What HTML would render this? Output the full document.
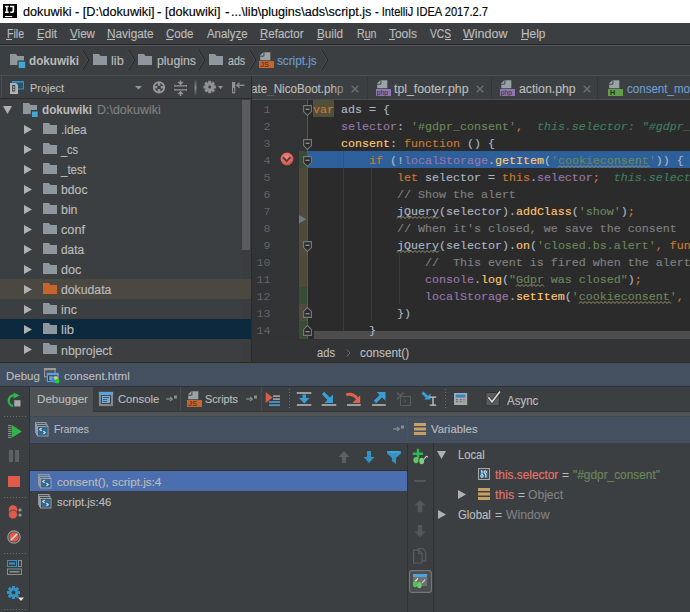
<!DOCTYPE html><html><head><meta charset="utf-8"><style>*{margin:0;padding:0;box-sizing:border-box}html,body{width:690px;height:612px;overflow:hidden;background:#3C3F41}.r{position:absolute}.t{position:absolute;white-space:pre;line-height:1;transform-origin:0 0}.s{position:absolute;overflow:visible}.code{-webkit-text-stroke:0.15px currentColor;position:absolute;left:313px;white-space:pre;font-family:"Liberation Mono",monospace;font-size:11.67px;line-height:1}.code u{text-decoration:none}.code i{font-style:italic}</style></head><body>
<div class="r" style="left:0px;top:0px;width:690px;height:23px;background:#FFFFFF;"></div>
<div class="r" style="left:3px;top:4px;width:14px;height:14px;background:#000000;"></div>
<div class="r" style="left:0px;top:23px;width:690px;height:21px;background:#3C3F41;"></div>
<div class="r" style="left:6px;top:39px;width:6px;height:1px;background:#BBBBBB;"></div>
<div class="r" style="left:37px;top:39px;width:6px;height:1px;background:#BBBBBB;"></div>
<div class="r" style="left:70px;top:39px;width:7px;height:1px;background:#BBBBBB;"></div>
<div class="r" style="left:107px;top:39px;width:8px;height:1px;background:#BBBBBB;"></div>
<div class="r" style="left:166px;top:39px;width:7px;height:1px;background:#BBBBBB;"></div>
<div class="r" style="left:237.7px;top:39px;width:4.600000000000023px;height:1px;background:#BBBBBB;"></div>
<div class="r" style="left:260px;top:39px;width:6px;height:1px;background:#BBBBBB;"></div>
<div class="r" style="left:317px;top:39px;width:6px;height:1px;background:#BBBBBB;"></div>
<div class="r" style="left:363.8px;top:39px;width:5.800000000000011px;height:1px;background:#BBBBBB;"></div>
<div class="r" style="left:389px;top:39px;width:6px;height:1px;background:#BBBBBB;"></div>
<div class="r" style="left:445.3px;top:39px;width:5.699999999999989px;height:1px;background:#BBBBBB;"></div>
<div class="r" style="left:463px;top:39px;width:10px;height:1px;background:#BBBBBB;"></div>
<div class="r" style="left:520.5px;top:39px;width:7.5px;height:1px;background:#BBBBBB;"></div>
<div class="r" style="left:0px;top:44px;width:690px;height:1px;background:#252526;"></div>
<div class="r" style="left:0px;top:45px;width:690px;height:1px;background:#555759;"></div>
<div class="r" style="left:0px;top:46px;width:690px;height:29px;background:#3C3F41;"></div>
<div class="r" style="left:0px;top:75px;width:690px;height:1px;background:#4D5052;"></div>
<div class="r" style="left:0px;top:76px;width:251px;height:22px;background:#3C3F41;"></div>
<div class="r" style="left:0px;top:98px;width:251px;height:1px;background:#2B2B2B;"></div>
<div class="r" style="left:1px;top:76px;width:1px;height:22px;background:#4B4E50;"></div>
<div class="r" style="left:0px;top:99px;width:251px;height:265px;background:#3C3F41;"></div>
<div class="r" style="left:241px;top:99px;width:10px;height:265px;background:#3A3D3F;"></div>
<div class="r" style="left:242px;top:100px;width:8px;height:150px;background:#595B5D;"></div>
<div class="r" style="left:251px;top:76px;width:1px;height:288px;background:#2B2B2B;"></div>
<div class="r" style="left:0px;top:279px;width:251px;height:20px;background:#4A4840;"></div>
<div class="r" style="left:0px;top:319px;width:251px;height:20px;background:#0D293E;"></div>
<div class="r" style="left:252px;top:76px;width:438px;height:23px;background:#3C3F41;"></div>
<div class="r" style="left:252px;top:99px;width:438px;height:1px;background:#4B4E50;"></div>
<div class="r" style="left:367px;top:77px;width:1px;height:22px;background:#333536;"></div>
<div class="r" style="left:491px;top:77px;width:1px;height:22px;background:#333536;"></div>
<div class="r" style="left:597px;top:77px;width:1px;height:22px;background:#333536;"></div>
<div class="r" style="left:252px;top:100px;width:56px;height:240px;background:#313335;"></div>
<div class="r" style="left:308px;top:100px;width:382px;height:240px;background:#2B2B2B;"></div>
<div class="r" style="left:299px;top:151px;width:8px;height:17px;background:#384C38;"></div>
<div class="r" style="left:299px;top:168px;width:8px;height:119px;background:#4F4A3C;"></div>
<div class="r" style="left:299px;top:287px;width:8px;height:34px;background:#384C38;"></div>
<div class="r" style="left:299px;top:304px;width:8px;height:17px;background:#4F4A3C;"></div>
<div class="r" style="left:299px;top:321px;width:8px;height:18px;background:#384C38;"></div>
<div class="r" style="left:307px;top:100px;width:1px;height:240px;background:#555759;"></div>
<div class="r" style="left:308px;top:151px;width:382px;height:17px;background:#2D5F9B;"></div>
<div class="r" style="left:313px;top:100px;width:21px;height:17px;background:#524F3B;"></div>
<div class="r" style="left:343px;top:151px;width:1px;height:189px;background:#393939;"></div>
<div class="r" style="left:343px;top:151px;width:1px;height:17px;background:#25528A;"></div>
<div class="r" style="left:371px;top:168px;width:1px;height:153px;background:#393939;"></div>
<div class="r" style="left:399px;top:253px;width:1px;height:51px;background:#393939;"></div>
<div class="r" style="left:314px;top:331px;width:376px;height:8px;background:#4D4D4D;"></div>
<div class="r" style="left:252px;top:339px;width:438px;height:1px;background:#323232;"></div>
<div class="r" style="left:252px;top:340px;width:438px;height:22px;background:#323436;"></div>
<div class="r" style="left:0px;top:362px;width:690px;height:1px;background:#2B2B2B;"></div>
<div class="r" style="left:0px;top:363px;width:690px;height:1px;background:#4B4C4C;"></div>
<div class="r" style="left:0px;top:364px;width:690px;height:22px;background:#444F60;"></div>
<div class="r" style="left:0px;top:386px;width:690px;height:1px;background:#2E343D;"></div>
<div class="r" style="left:0px;top:387px;width:690px;height:24px;background:#3C3F41;"></div>
<div class="r" style="left:30px;top:387px;width:63px;height:25px;background:#4E5254;"></div>
<div class="r" style="left:93px;top:411px;width:597px;height:1px;background:#36383A;"></div>
<div class="r" style="left:30px;top:412px;width:660px;height:4px;background:#4F5355;"></div>
<div class="r" style="left:30px;top:416px;width:660px;height:1px;background:#46494C;"></div>
<div class="r" style="left:29px;top:387px;width:1px;height:225px;background:#2F3133;"></div>
<div class="r" style="left:180px;top:387px;width:1px;height:24px;background:#4A4D4F;"></div>
<div class="r" style="left:261px;top:387px;width:1px;height:24px;background:#4A4D4F;"></div>
<div class="r" style="left:30px;top:417px;width:660px;height:26px;background:#444F60;"></div>
<div class="r" style="left:407px;top:417px;width:1px;height:195px;background:#2F3133;"></div>
<div class="r" style="left:407px;top:417px;width:1px;height:26px;background:#505356;"></div>
<div class="r" style="left:30px;top:443px;width:377px;height:169px;background:#3C3F41;"></div>
<div class="r" style="left:30px;top:443px;width:660px;height:1px;background:#393C3F;"></div>
<div class="r" style="left:30px;top:470px;width:377px;height:1px;background:#2F3133;"></div>
<div class="r" style="left:30px;top:471px;width:377px;height:20px;background:#4B6EAF;"></div>
<div class="r" style="left:408px;top:443px;width:282px;height:169px;background:#3C3F41;"></div>
<div class="r" style="left:433px;top:443px;width:1px;height:169px;background:#2F3133;"></div>
<div class="r" style="left:414px;top:480px;width:12px;height:2px;background:#55585A;"></div>
<div class="r" style="left:0px;top:387px;width:29px;height:225px;background:#3C3F41;"></div>
<div class="r" style="left:4px;top:416px;width:1px;height:1px;background:#6B6E70;"></div>
<div class="r" style="left:7px;top:416px;width:1px;height:1px;background:#6B6E70;"></div>
<div class="r" style="left:10px;top:416px;width:1px;height:1px;background:#6B6E70;"></div>
<div class="r" style="left:13px;top:416px;width:1px;height:1px;background:#6B6E70;"></div>
<div class="r" style="left:16px;top:416px;width:1px;height:1px;background:#6B6E70;"></div>
<div class="r" style="left:19px;top:416px;width:1px;height:1px;background:#6B6E70;"></div>
<div class="r" style="left:22px;top:416px;width:1px;height:1px;background:#6B6E70;"></div>
<div class="r" style="left:25px;top:416px;width:1px;height:1px;background:#6B6E70;"></div>
<div class="r" style="left:9px;top:450px;width:4px;height:12px;background:#5E6164;"></div>
<div class="r" style="left:15px;top:450px;width:4px;height:12px;background:#5E6164;"></div>
<div class="r" style="left:8px;top:476px;width:12px;height:11px;background:#E05B4B;"></div>
<div class="r" style="left:4px;top:497px;width:1px;height:1px;background:#6B6E70;"></div>
<div class="r" style="left:7px;top:497px;width:1px;height:1px;background:#6B6E70;"></div>
<div class="r" style="left:10px;top:497px;width:1px;height:1px;background:#6B6E70;"></div>
<div class="r" style="left:13px;top:497px;width:1px;height:1px;background:#6B6E70;"></div>
<div class="r" style="left:16px;top:497px;width:1px;height:1px;background:#6B6E70;"></div>
<div class="r" style="left:19px;top:497px;width:1px;height:1px;background:#6B6E70;"></div>
<div class="r" style="left:22px;top:497px;width:1px;height:1px;background:#6B6E70;"></div>
<div class="r" style="left:25px;top:497px;width:1px;height:1px;background:#6B6E70;"></div>
<div class="r" style="left:4px;top:553px;width:1px;height:1px;background:#6B6E70;"></div>
<div class="r" style="left:7px;top:553px;width:1px;height:1px;background:#6B6E70;"></div>
<div class="r" style="left:10px;top:553px;width:1px;height:1px;background:#6B6E70;"></div>
<div class="r" style="left:13px;top:553px;width:1px;height:1px;background:#6B6E70;"></div>
<div class="r" style="left:16px;top:553px;width:1px;height:1px;background:#6B6E70;"></div>
<div class="r" style="left:19px;top:553px;width:1px;height:1px;background:#6B6E70;"></div>
<div class="r" style="left:22px;top:553px;width:1px;height:1px;background:#6B6E70;"></div>
<div class="r" style="left:25px;top:553px;width:1px;height:1px;background:#6B6E70;"></div>
<div class="r" style="left:4px;top:609px;width:1px;height:1px;background:#6B6E70;"></div>
<div class="r" style="left:7px;top:609px;width:1px;height:1px;background:#6B6E70;"></div>
<div class="r" style="left:10px;top:609px;width:1px;height:1px;background:#6B6E70;"></div>
<div class="r" style="left:13px;top:609px;width:1px;height:1px;background:#6B6E70;"></div>
<div class="r" style="left:16px;top:609px;width:1px;height:1px;background:#6B6E70;"></div>
<div class="r" style="left:19px;top:609px;width:1px;height:1px;background:#6B6E70;"></div>
<div class="r" style="left:22px;top:609px;width:1px;height:1px;background:#6B6E70;"></div>
<div class="r" style="left:25px;top:609px;width:1px;height:1px;background:#6B6E70;"></div>
<svg class="s" style="left:3px;top:4px" width="14" height="14" viewBox="0 0 14 14"><path d="M2 1.8h3.7v1.5h-1.1v4.3h1.1v1.5H2V7.6h1.1V3.3H2z" fill="#fff"/><path d="M7 1.8h4.2v5.2c0 1.4-0.9 2.1-2.2 2.1-0.8 0-1.5-0.3-2-0.7l0.6-1.2c0.3 0.3 0.7 0.4 1.1 0.4 0.5 0 0.8-0.3 0.8-0.8V3.3H7z" fill="#fff"/><rect x="2" y="12" width="7.2" height="1.1" fill="#fff"/></svg>
<svg class="s" style="left:10px;top:54px" width="16" height="14" viewBox="0 0 16 14"><path d="M0 0h6l1.5 2H14v9H0z" fill="#8E979E"/><rect x="7.5" y="6.5" width="8" height="8" fill="#3C3F41"/><rect x="8.7" y="7.7" width="6.5" height="6.3" fill="#3FA7D6"/></svg>
<svg class="s" style="left:80.5px;top:48px" width="9" height="24" viewBox="0 0 9 24"><path d="M0.6 1.5L6.9 12L0.6 22.5" stroke="#4E5153" stroke-width="0.9" fill="none"/><path d="M1.5 1.5L7.8 12L1.5 22.5" stroke="#262728" stroke-width="1" fill="none"/></svg>
<svg class="s" style="left:93px;top:54px" width="14" height="11" viewBox="0 0 14 11"><path d="M0 0h6l1.5 2H14v9H0z" fill="#8E979E"/></svg>
<svg class="s" style="left:126.5px;top:48px" width="9" height="24" viewBox="0 0 9 24"><path d="M0.6 1.5L6.9 12L0.6 22.5" stroke="#4E5153" stroke-width="0.9" fill="none"/><path d="M1.5 1.5L7.8 12L1.5 22.5" stroke="#262728" stroke-width="1" fill="none"/></svg>
<svg class="s" style="left:138px;top:54px" width="14" height="11" viewBox="0 0 14 11"><path d="M0 0h6l1.5 2H14v9H0z" fill="#8E979E"/></svg>
<svg class="s" style="left:197px;top:48px" width="9" height="24" viewBox="0 0 9 24"><path d="M0.6 1.5L6.9 12L0.6 22.5" stroke="#4E5153" stroke-width="0.9" fill="none"/><path d="M1.5 1.5L7.8 12L1.5 22.5" stroke="#262728" stroke-width="1" fill="none"/></svg>
<svg class="s" style="left:209px;top:54px" width="14" height="11" viewBox="0 0 14 11"><path d="M0 0h6l1.5 2H14v9H0z" fill="#8E979E"/></svg>
<svg class="s" style="left:247.5px;top:48px" width="9" height="24" viewBox="0 0 9 24"><path d="M0.6 1.5L6.9 12L0.6 22.5" stroke="#4E5153" stroke-width="0.9" fill="none"/><path d="M1.5 1.5L7.8 12L1.5 22.5" stroke="#262728" stroke-width="1" fill="none"/></svg>
<svg class="s" style="left:259px;top:52px" width="16" height="16" viewBox="0 0 16 16"><path d="M5 0.2h6.3v8H1.2V4z" fill="#9AA3A8"/><path d="M1 3.6L4.6 0h0.4v4H1z" fill="#9AA3A8"/><path d="M4.9 0v4.2H0.8" stroke="#3C3F41" stroke-width="0.9" fill="none"/><rect x="0" y="9" width="15" height="7" fill="#C8652E"/><text x="1.3" y="15.2" font-family="Liberation Sans" font-size="7.2" font-weight="normal" fill="#2B2B2B">JS</text></svg>
<svg class="s" style="left:320px;top:48px" width="9" height="24" viewBox="0 0 9 24"><path d="M0.6 1.5L6.9 12L0.6 22.5" stroke="#4E5153" stroke-width="0.9" fill="none"/><path d="M1.5 1.5L7.8 12L1.5 22.5" stroke="#262728" stroke-width="1" fill="none"/></svg>
<svg class="s" style="left:9px;top:80px" width="17" height="15" viewBox="0 0 17 15"><rect x="3.5" y="1.5" width="11" height="7.5" fill="#27506B" stroke="#3592C4" stroke-width="1"/><rect x="3" y="1" width="12" height="1.6" fill="#3592C4"/><path d="M1 3h6l2 2v9H1z" fill="#AFB1B3"/><path d="M3.2 5h3v6.5h-3z" fill="#3C3F41"/><rect x="4" y="6.2" width="1.6" height="1.5" fill="#AFB1B3"/><rect x="4" y="8.8" width="1.6" height="1.5" fill="#AFB1B3"/></svg>
<svg class="s" style="left:135px;top:86px" width="8" height="4" viewBox="0 0 8 4"><path d="M0 0h7l-3.5 3.5z" fill="#939597"/></svg>
<svg class="s" style="left:152px;top:81px" width="14" height="13" viewBox="0 0 14 13"><circle cx="7" cy="6.3" r="5.2" fill="none" stroke="#939597" stroke-width="1.9"/><path d="M7 1.5v3.2M7 8v3.2M2 6.3h3.3M8.7 6.3h3.3" stroke="#939597" stroke-width="2.6"/></svg>
<svg class="s" style="left:174px;top:80px" width="13" height="17" viewBox="0 0 13 17"><path d="M0.5 5.8h12M0.5 9.8h12" stroke="#939597" stroke-width="1.3"/><path d="M0.5 5v1.5M12.5 5v1.5M0.5 9v1.5M12.5 9v1.5" stroke="#939597" stroke-width="1"/><path d="M6.5 0.5v4M6.5 11.5v4.5" stroke="#939597" stroke-width="1.3"/><path d="M4 2.3l2.5 2.5 2.5-2.5zM4 13.8l2.5-2.5 2.5 2.5z" fill="#939597" stroke="#939597" stroke-width="0.8"/></svg>
<svg class="s" style="left:194px;top:79px" width="3" height="17" viewBox="0 0 3 17"><defs><linearGradient id="sg" x1="0" y1="0" x2="0" y2="1"><stop offset="0" stop-color="#3C3F41"/><stop offset="0.5" stop-color="#8A8C8E"/><stop offset="1" stop-color="#3C3F41"/></linearGradient></defs><rect x="0.5" y="0" width="2" height="17" fill="url(#sg)"/></svg>
<svg class="s" style="left:203px;top:80px" width="21" height="14" viewBox="0 0 21 14"><g fill="#8F9193"><circle cx="6.7" cy="7" r="4.6"/><rect x="5.2" y="0.8" width="3" height="12.4"/><rect x="0.5" y="5.5" width="12.4" height="3"/><rect x="5.2" y="0.8" width="3" height="12.4" transform="rotate(45 6.7 7)"/><rect x="5.2" y="0.8" width="3" height="12.4" transform="rotate(-45 6.7 7)"/></g><circle cx="6.7" cy="7" r="1.4" fill="#3C3F41"/><path d="M15 6h5l-2.5 3.2z" fill="#8F9193"/></svg>
<svg class="s" style="left:231px;top:81px" width="14" height="13" viewBox="0 0 14 13"><rect x="1" y="1" width="3.2" height="11.3" fill="#8F9193"/><rect x="2.1" y="7" width="1.1" height="4.3" fill="#3C3F41"/><path d="M6 4.3h7.5" stroke="#8F9193" stroke-width="1.3"/><path d="M8.5 1.8l-2.6 2.5 2.6 2.5" stroke="#8F9193" fill="none" stroke-width="1.3"/></svg>
<svg class="s" style="left:3px;top:106px" width="9" height="8" viewBox="0 0 9 8"><path d="M0 0H9L4.5 8z" fill="#AFB1B3"/></svg>
<svg class="s" style="left:23px;top:103px" width="15" height="14" viewBox="0 0 15 14"><path d="M0 0h6l1.5 2H14v9H0z" fill="#8E979E"/><rect x="7.8" y="7" width="7.2" height="7" fill="#3C3F41"/><rect x="9" y="8.5" width="5.7" height="5.5" fill="#3FA7D6"/></svg>
<svg class="s" style="left:24px;top:125px" width="8" height="9" viewBox="0 0 8 9"><path d="M0 0L8 4.5L0 9z" fill="#AFB1B3"/></svg>
<svg class="s" style="left:43px;top:123px" width="14" height="11" viewBox="0 0 14 11"><path d="M0 0h6l1.5 2H14v9H0z" fill="#8E979E"/></svg>
<svg class="s" style="left:24px;top:145px" width="8" height="9" viewBox="0 0 8 9"><path d="M0 0L8 4.5L0 9z" fill="#AFB1B3"/></svg>
<svg class="s" style="left:43px;top:143px" width="14" height="11" viewBox="0 0 14 11"><path d="M0 0h6l1.5 2H14v9H0z" fill="#8E979E"/></svg>
<svg class="s" style="left:24px;top:165px" width="8" height="9" viewBox="0 0 8 9"><path d="M0 0L8 4.5L0 9z" fill="#AFB1B3"/></svg>
<svg class="s" style="left:43px;top:163px" width="14" height="11" viewBox="0 0 14 11"><path d="M0 0h6l1.5 2H14v9H0z" fill="#8E979E"/></svg>
<svg class="s" style="left:24px;top:185px" width="8" height="9" viewBox="0 0 8 9"><path d="M0 0L8 4.5L0 9z" fill="#AFB1B3"/></svg>
<svg class="s" style="left:43px;top:183px" width="14" height="11" viewBox="0 0 14 11"><path d="M0 0h6l1.5 2H14v9H0z" fill="#8E979E"/></svg>
<svg class="s" style="left:24px;top:205px" width="8" height="9" viewBox="0 0 8 9"><path d="M0 0L8 4.5L0 9z" fill="#AFB1B3"/></svg>
<svg class="s" style="left:43px;top:203px" width="14" height="11" viewBox="0 0 14 11"><path d="M0 0h6l1.5 2H14v9H0z" fill="#8E979E"/></svg>
<svg class="s" style="left:24px;top:225px" width="8" height="9" viewBox="0 0 8 9"><path d="M0 0L8 4.5L0 9z" fill="#AFB1B3"/></svg>
<svg class="s" style="left:43px;top:223px" width="14" height="11" viewBox="0 0 14 11"><path d="M0 0h6l1.5 2H14v9H0z" fill="#8E979E"/></svg>
<svg class="s" style="left:24px;top:245px" width="8" height="9" viewBox="0 0 8 9"><path d="M0 0L8 4.5L0 9z" fill="#AFB1B3"/></svg>
<svg class="s" style="left:43px;top:243px" width="14" height="11" viewBox="0 0 14 11"><path d="M0 0h6l1.5 2H14v9H0z" fill="#8E979E"/></svg>
<svg class="s" style="left:24px;top:265px" width="8" height="9" viewBox="0 0 8 9"><path d="M0 0L8 4.5L0 9z" fill="#AFB1B3"/></svg>
<svg class="s" style="left:43px;top:263px" width="14" height="11" viewBox="0 0 14 11"><path d="M0 0h6l1.5 2H14v9H0z" fill="#8E979E"/></svg>
<svg class="s" style="left:24px;top:285px" width="8" height="9" viewBox="0 0 8 9"><path d="M0 0L8 4.5L0 9z" fill="#AFB1B3"/></svg>
<svg class="s" style="left:43px;top:283px" width="14" height="11" viewBox="0 0 14 11"><path d="M0 0h6l1.5 2H14v9H0z" fill="#C3652C"/></svg>
<svg class="s" style="left:24px;top:305px" width="8" height="9" viewBox="0 0 8 9"><path d="M0 0L8 4.5L0 9z" fill="#AFB1B3"/></svg>
<svg class="s" style="left:43px;top:303px" width="14" height="11" viewBox="0 0 14 11"><path d="M0 0h6l1.5 2H14v9H0z" fill="#8E979E"/></svg>
<svg class="s" style="left:24px;top:325px" width="8" height="9" viewBox="0 0 8 9"><path d="M0 0L8 4.5L0 9z" fill="#AFB1B3"/></svg>
<svg class="s" style="left:43px;top:323px" width="14" height="11" viewBox="0 0 14 11"><path d="M0 0h6l1.5 2H14v9H0z" fill="#8E979E"/></svg>
<svg class="s" style="left:24px;top:345px" width="8" height="9" viewBox="0 0 8 9"><path d="M0 0L8 4.5L0 9z" fill="#AFB1B3"/></svg>
<svg class="s" style="left:43px;top:343px" width="14" height="11" viewBox="0 0 14 11"><path d="M0 0h6l1.5 2H14v9H0z" fill="#8E979E"/></svg>
<svg class="s" style="left:351px;top:85px" width="8" height="8" viewBox="0 0 8 8"><path d="M0.7 0.7l6.6 6.6M7.3 0.7l-6.6 6.6" stroke="#6E7072" stroke-width="1.3"/></svg>
<svg class="s" style="left:376px;top:80px" width="16" height="16" viewBox="0 0 16 16"><path d="M5 0.2h6.3v8H1.2V4z" fill="#9AA3A8"/><path d="M1 3.6L4.6 0h0.4v4H1z" fill="#9AA3A8"/><path d="M4.9 0v4.2H0.8" stroke="#3C3F41" stroke-width="0.9" fill="none"/><rect x="0" y="9" width="15" height="7" fill="#8E76B6"/><text x="0.8" y="15.2" font-family="Liberation Sans" font-size="6.6" font-weight="normal" fill="#2B2B2B">php</text></svg>
<svg class="s" style="left:475.5px;top:85px" width="8" height="8" viewBox="0 0 8 8"><path d="M0.7 0.7l6.6 6.6M7.3 0.7l-6.6 6.6" stroke="#6E7072" stroke-width="1.3"/></svg>
<svg class="s" style="left:500px;top:80px" width="16" height="16" viewBox="0 0 16 16"><path d="M5 0.2h6.3v8H1.2V4z" fill="#9AA3A8"/><path d="M1 3.6L4.6 0h0.4v4H1z" fill="#9AA3A8"/><path d="M4.9 0v4.2H0.8" stroke="#3C3F41" stroke-width="0.9" fill="none"/><rect x="0" y="9" width="15" height="7" fill="#8E76B6"/><text x="0.8" y="15.2" font-family="Liberation Sans" font-size="6.6" font-weight="normal" fill="#2B2B2B">php</text></svg>
<svg class="s" style="left:583px;top:85px" width="8" height="8" viewBox="0 0 8 8"><path d="M0.7 0.7l6.6 6.6M7.3 0.7l-6.6 6.6" stroke="#6E7072" stroke-width="1.3"/></svg>
<svg class="s" style="left:608px;top:80px" width="16" height="16" viewBox="0 0 16 16"><path d="M5 0.2h6.3v8H1.2V4z" fill="#9AA3A8"/><path d="M1 3.6L4.6 0h0.4v4H1z" fill="#9AA3A8"/><path d="M4.9 0v4.2H0.8" stroke="#3C3F41" stroke-width="0.9" fill="none"/><rect x="0" y="9" width="15" height="7" fill="#62A048"/><text x="2" y="15.2" font-family="Liberation Sans" font-size="7.2" font-weight="bold" fill="#2B2B2B">H</text></svg>
<svg class="s" style="left:303px;top:105px" width="9" height="11" viewBox="0 0 9 11"><path d="M0.6 0.6h7.8v6l-3.9 3.8l-3.9-3.8z" fill="#2B2B2B" stroke="#76787A" stroke-width="1.1"/><path d="M2.5 4.3h4" stroke="#909294" stroke-width="1.3"/></svg>
<svg class="s" style="left:303px;top:139px" width="9" height="11" viewBox="0 0 9 11"><path d="M0.6 0.6h7.8v6l-3.9 3.8l-3.9-3.8z" fill="#2B2B2B" stroke="#76787A" stroke-width="1.1"/><path d="M2.5 4.3h4" stroke="#909294" stroke-width="1.3"/></svg>
<svg class="s" style="left:303px;top:156px" width="9" height="11" viewBox="0 0 9 11"><path d="M0.6 0.6h7.8v6l-3.9 3.8l-3.9-3.8z" fill="#2B2B2B" stroke="#76787A" stroke-width="1.1"/><path d="M2.5 4.3h4" stroke="#909294" stroke-width="1.3"/></svg>
<svg class="s" style="left:303px;top:241px" width="9" height="11" viewBox="0 0 9 11"><path d="M0.6 0.6h7.8v6l-3.9 3.8l-3.9-3.8z" fill="#2B2B2B" stroke="#76787A" stroke-width="1.1"/><path d="M2.5 4.3h4" stroke="#909294" stroke-width="1.3"/></svg>
<svg class="s" style="left:303px;top:307px" width="9" height="11" viewBox="0 0 9 11"><path d="M0.6 10.4h7.8v-6l-3.9-3.8l-3.9 3.8z" fill="#2B2B2B" stroke="#76787A" stroke-width="1.1"/><path d="M2.5 6.7h4" stroke="#909294" stroke-width="1.3"/></svg>
<svg class="s" style="left:303px;top:324.5px" width="9" height="11" viewBox="0 0 9 11"><path d="M0.6 10.4h7.8v-6l-3.9-3.8l-3.9 3.8z" fill="#2B2B2B" stroke="#76787A" stroke-width="1.1"/><path d="M2.5 6.7h4" stroke="#909294" stroke-width="1.3"/></svg>
<svg class="s" style="left:299px;top:214.5px" width="8" height="9" viewBox="0 0 8 9"><path d="M0 0L7.2 4.3L0 8.6z" fill="#6C7A8A"/></svg>
<svg class="s" style="left:280px;top:152px" width="14" height="14" viewBox="0 0 14 14"><defs><radialGradient id="bp" cx="0.45" cy="0.4" r="0.6"><stop offset="0" stop-color="#F08A80"/><stop offset="0.75" stop-color="#E0625A"/><stop offset="1" stop-color="#C94A45"/></radialGradient></defs><circle cx="7" cy="7" r="6.4" fill="url(#bp)"/><path d="M3 5.2l3.6 3.9 3.9-3.9" stroke="#474141" stroke-width="2" fill="none"/></svg>
<svg class="s" style="left:346px;top:349px" width="5" height="8" viewBox="0 0 5 8"><path d="M0.8 0.5l3.2 3.5l-3.2 3.5" stroke="#6E7072" fill="none" stroke-width="1"/></svg>
<svg class="s" style="left:44px;top:368px" width="17" height="16" viewBox="0 0 17 16"><rect x="0.6" y="0.6" width="10.4" height="8.2" fill="#3F4756" stroke="#9C9A96" stroke-width="1.2"/><rect x="0" y="0" width="11.6" height="2.3" fill="#9C9A96"/><rect x="2.2" y="3.5" width="7" height="0.9" fill="#5E6670"/><rect x="3.4" y="5.5" width="10.6" height="8" fill="#333B47" stroke="#5BA4DB" stroke-width="1.2"/><rect x="2.8" y="4.9" width="11.8" height="2.4" fill="#5BA4DB"/><rect x="5.2" y="8.2" width="4" height="4.2" fill="#6FA3CF"/><circle cx="11.5" cy="11.5" r="3.5" fill="#3E8ACB"/><path d="M9.5 9.2c1.2-1.2 3.5-1.2 4.6 0.2l-0.8 2.3-2.3 0.3z" fill="#E8C85A"/><circle cx="13.3" cy="13.3" r="2.2" fill="#1FD51F"/></svg>
<svg class="s" style="left:98px;top:391px" width="16" height="16" viewBox="0 0 16 16"><rect x="0.9" y="0.9" width="14.2" height="14.2" fill="#858789"/><rect x="0.9" y="0.9" width="14.2" height="3" fill="#5BA4DB"/><rect x="3.1" y="4.2" width="9.7" height="8.6" fill="#333537"/><rect x="3.9" y="4.9" width="8.1" height="7.1" fill="#6FAADB"/><path d="M5 6.5h6M5 8.5h4M5 10.5h4" stroke="#3A5870" stroke-width="0.9"/></svg>
<svg class="s" style="left:166px;top:395px" width="11" height="7" viewBox="0 0 11 7"><path d="M0 4h6" stroke="#8A8E91" stroke-width="1.2"/><path d="M4 2l2.3 2-2.3 2" stroke="#8A8E91" fill="none" stroke-width="1.2"/><rect x="8" y="0.5" width="3" height="3" fill="#8A8E91"/></svg>
<svg class="s" style="left:187px;top:391px" width="16" height="16" viewBox="0 0 16 16"><path d="M5 0.2h6.3v8H1.2V4z" fill="#9AA3A8"/><path d="M1 3.6L4.6 0h0.4v4H1z" fill="#9AA3A8"/><path d="M4.9 0v4.2H0.8" stroke="#3C3F41" stroke-width="0.9" fill="none"/><rect x="0" y="9" width="15" height="7" fill="#C8652E"/><text x="1.3" y="15.2" font-family="Liberation Sans" font-size="7.2" font-weight="normal" fill="#2B2B2B">JS</text></svg>
<svg class="s" style="left:246px;top:395px" width="11" height="7" viewBox="0 0 11 7"><path d="M0 4h6" stroke="#8A8E91" stroke-width="1.2"/><path d="M4 2l2.3 2-2.3 2" stroke="#8A8E91" fill="none" stroke-width="1.2"/><rect x="8" y="0.5" width="3" height="3" fill="#8A8E91"/></svg>
<svg class="s" style="left:260px;top:386px" width="245" height="26" viewBox="0 0 245 26"><g transform="translate(-260,-386)"><path d="M265.7 392L272.6 397.5L265.7 403z" fill="#DB5D4E"/><rect x="273" y="395.2" width="7" height="1.8" fill="#9A9C9E"/><rect x="273" y="398.2" width="7" height="1.8" fill="#9A9C9E"/><rect x="269" y="401.1" width="11" height="1.8" fill="#4A94C8"/><rect x="269" y="404.2" width="11" height="1.8" fill="#4A94C8"/><rect x="296.8" y="392" width="14.5" height="2" fill="#9A9C9E"/><rect x="296.8" y="404" width="14.5" height="2" fill="#9A9C9E"/><rect x="302.5" y="394.5" width="3.5" height="4" fill="#389FD6"/><path d="M299 398H309.5L304.25 403.5z" fill="#389FD6"/><rect x="321.7" y="404" width="14.5" height="2" fill="#9A9C9E"/><path d="M323 393L331 401" stroke="#389FD6" stroke-width="3.2"/><path d="M333 394.4V403H324.4z" fill="#389FD6"/><rect x="347" y="404" width="13.8" height="2" fill="#9A9C9E"/><path d="M346.3 394.6C351 393.6 354.5 395 357.2 398.6" stroke="#E0624F" stroke-width="3" fill="none"/><path d="M360.2 395.2V403H352.4z" fill="#E0624F"/><rect x="372" y="404" width="13.8" height="2" fill="#9A9C9E"/><path d="M375 402L382.5 394.5" stroke="#389FD6" stroke-width="3.2"/><path d="M376.8 392H385.5V400.7z" fill="#389FD6"/><path d="M397 392.5L403.5 399.5M403.5 392.5L397 399.5" stroke="#5A5D5F" stroke-width="1.7"/><rect x="400.5" y="396.5" width="10" height="9" fill="#3C3F41" stroke="#5A5D5F" stroke-width="1"/><path d="M404 399.5L406 401L404 402.5" stroke="#5A5D5F" fill="none" stroke-width="0.9"/><path d="M422.5 392.5L428 398" stroke="#389FD6" stroke-width="2.8"/><path d="M430.4 393.5V399.6H424.3z" fill="#389FD6"/><path d="M429.7 397.2H436.2M429.7 405.2H436.2M433 397V405.5" stroke="#C8C8C8" stroke-width="1.3"/><rect x="454" y="393" width="13.2" height="12" fill="#A5A7A9"/><rect x="455.2" y="394.1" width="10.7" height="3.9" fill="#4A7FA8" stroke="#7FC0E8" stroke-width="0.8"/><rect x="456" y="399" width="2" height="1.2" fill="#6E7072"/><rect x="459.6" y="399" width="2" height="1.2" fill="#6E7072"/><rect x="462.5" y="399" width="2.6" height="1.2" fill="#E0624F"/><rect x="456" y="401" width="2" height="1.2" fill="#6E7072"/><rect x="459.6" y="401" width="2" height="1.2" fill="#6E7072"/><rect x="462.5" y="401" width="2.6" height="1.2" fill="#3FC14F"/><rect x="485.8" y="392.5" width="13.5" height="13.3" rx="1.5" fill="#595C5E" stroke="#2F3133" stroke-width="1"/><path d="M488.3 397.3L492 401.8L500 391.5" stroke="#2B2B2B" stroke-width="3.2" fill="none"/><path d="M488.3 397.3L492 401.8L500 391.5" stroke="#DADADA" stroke-width="1.7" fill="none"/><rect x="289" y="389" width="1" height="1" fill="#6B6E70"/><rect x="445" y="389" width="1" height="1" fill="#6B6E70"/><rect x="289" y="392" width="1" height="1" fill="#6B6E70"/><rect x="445" y="392" width="1" height="1" fill="#6B6E70"/><rect x="289" y="395" width="1" height="1" fill="#6B6E70"/><rect x="445" y="395" width="1" height="1" fill="#6B6E70"/><rect x="289" y="398" width="1" height="1" fill="#6B6E70"/><rect x="445" y="398" width="1" height="1" fill="#6B6E70"/><rect x="289" y="401" width="1" height="1" fill="#6B6E70"/><rect x="445" y="401" width="1" height="1" fill="#6B6E70"/><rect x="289" y="404" width="1" height="1" fill="#6B6E70"/><rect x="445" y="404" width="1" height="1" fill="#6B6E70"/><rect x="289" y="407" width="1" height="1" fill="#6B6E70"/><rect x="445" y="407" width="1" height="1" fill="#6B6E70"/></g></svg>
<svg class="s" style="left:35px;top:422px" width="14" height="15" viewBox="0 0 14 15"><rect x="0.6" y="0.6" width="10.4" height="10" fill="#404B5C" stroke="#9A9C9E" stroke-width="1.1"/><rect x="1.5" y="2.5" width="10.4" height="10" fill="#404B5C" stroke="#9A9C9E" stroke-width="1.1"/><rect x="2.5" y="4.5" width="10.5" height="9.5" fill="#404B5C" stroke="#9A9C9E" stroke-width="1.1"/><rect x="3.3" y="5.3" width="8.9" height="7.9" fill="#2F6A94"/><path d="M6.6 6.3L4.9 7.6L6.6 8.9M8.4 9.3L10.1 10.6L8.4 11.9" stroke="#F0F0F0" stroke-width="1.1" fill="none"/></svg>
<svg class="s" style="left:393px;top:424.5px" width="11" height="7" viewBox="0 0 11 7"><path d="M0 4h6" stroke="#8A8E91" stroke-width="1.2"/><path d="M4 2l2.3 2-2.3 2" stroke="#8A8E91" fill="none" stroke-width="1.2"/><rect x="8" y="0.5" width="3" height="3" fill="#8A8E91"/></svg>
<svg class="s" style="left:414px;top:423px" width="12" height="12" viewBox="0 0 12 12"><rect x="0" y="0" width="12" height="3" fill="#C9A063"/><rect x="0" y="4.5" width="12" height="3" fill="#C9A063"/><rect x="0" y="9" width="12" height="3" fill="#C9A063"/></svg>
<svg class="s" style="left:338px;top:451px" width="12" height="12" viewBox="0 0 12 12"><path d="M6 0L11.5 6H8v6H4V6H0.5z" fill="#5E6164"/></svg>
<svg class="s" style="left:363px;top:451px" width="12" height="12" viewBox="0 0 12 12"><path d="M6 12L11.5 6H8V0H4v6H0.5z" fill="#3592C4"/></svg>
<svg class="s" style="left:387px;top:451px" width="14" height="13" viewBox="0 0 14 13"><path d="M0 0h14v2.5l-5 4.5v6l-4-3v-3L0 2.5z" fill="#3592C4"/><path d="M1.5 1h11" stroke="#56B5E8" stroke-width="1"/></svg>
<svg class="s" style="left:38px;top:474px" width="14" height="15" viewBox="0 0 14 15"><rect x="0.6" y="0.6" width="10.4" height="10" fill="#4B6EAF" stroke="#9A9C9E" stroke-width="1.1"/><rect x="1.5" y="2.5" width="10.4" height="10" fill="#4B6EAF" stroke="#9A9C9E" stroke-width="1.1"/><rect x="2.5" y="4.5" width="10.5" height="9.5" fill="#4B6EAF" stroke="#9A9C9E" stroke-width="1.1"/><rect x="3.3" y="5.3" width="8.9" height="7.9" fill="#2F6A94"/><path d="M6.6 6.3L4.9 7.6L6.6 8.9M8.4 9.3L10.1 10.6L8.4 11.9" stroke="#F0F0F0" stroke-width="1.1" fill="none"/></svg>
<svg class="s" style="left:38px;top:494px" width="14" height="15" viewBox="0 0 14 15"><rect x="0.6" y="0.6" width="10.4" height="10" fill="#3C3F41" stroke="#9A9C9E" stroke-width="1.1"/><rect x="1.5" y="2.5" width="10.4" height="10" fill="#3C3F41" stroke="#9A9C9E" stroke-width="1.1"/><rect x="2.5" y="4.5" width="10.5" height="9.5" fill="#3C3F41" stroke="#9A9C9E" stroke-width="1.1"/><rect x="3.3" y="5.3" width="8.9" height="7.9" fill="#2F6A94"/><path d="M6.6 6.3L4.9 7.6L6.6 8.9M8.4 9.3L10.1 10.6L8.4 11.9" stroke="#F0F0F0" stroke-width="1.1" fill="none"/></svg>
<svg class="s" style="left:412px;top:448px" width="18" height="17" viewBox="0 0 18 17"><path d="M6 0.8v10M0.7 5.8h10.3" stroke="#2DB84D" stroke-width="2.4"/><ellipse cx="4" cy="12.1" rx="2.6" ry="3.1" fill="#62C462"/><ellipse cx="9.7" cy="13" rx="2.4" ry="3.3" fill="#7ACF7A"/><path d="M11.8 11.5l2.3-2.8c0.6-0.7 1.6-0.3 1.4 0.6" stroke="#D0D0D0" fill="none" stroke-width="1.1"/></svg>
<svg class="s" style="left:414px;top:500px" width="12" height="13" viewBox="0 0 12 13"><path d="M6 0L11.6 5.6H8.2v6.6H3.8V5.6H0.4z" fill="#55585A"/></svg>
<svg class="s" style="left:414px;top:524.5px" width="12" height="13" viewBox="0 0 12 13"><path d="M6 12.2L11.6 6.6H8.2V0H3.8v6.6H0.4z" fill="#55585A"/></svg>
<svg class="s" style="left:413px;top:548px" width="15" height="17" viewBox="0 0 15 17"><path d="M5.2 0.6h4.6l2.9 2.9v9.3H5.2z" fill="none" stroke="#5A5D5F" stroke-width="1.2"/><path d="M0.6 2.2h5.2l3.2 3.2v9.6H0.6z" fill="#3C3F41" stroke="#5A5D5F" stroke-width="1.2"/><path d="M5.6 2.2v3.4h3.4" fill="none" stroke="#5A5D5F" stroke-width="1"/></svg>
<svg class="s" style="left:409px;top:570px" width="23" height="23" viewBox="0 0 23 23"><rect x="0.6" y="0.6" width="21.8" height="21.8" rx="2.5" fill="#4A4E50" stroke="#75787A" stroke-width="1.1"/><rect x="4" y="4" width="14.2" height="3" fill="#4DA3E0"/><rect x="4" y="7" width="14.2" height="9" fill="#6E7072"/><path d="M6 11.5l3-3.2M13 13l3.2-3.5" stroke="#E8E8E8" stroke-width="1.1" fill="none"/><ellipse cx="6.1" cy="14.1" rx="2.3" ry="3.2" fill="#55C055"/><ellipse cx="10.4" cy="15.1" rx="2.3" ry="3.2" fill="#6ACB6A"/></svg>
<svg class="s" style="left:437px;top:451px" width="9" height="8" viewBox="0 0 9 8"><path d="M0 0H9L4.5 8z" fill="#AFB1B3"/></svg>
<svg class="s" style="left:478px;top:468px" width="12" height="12" viewBox="0 0 12 12"><rect x="0.6" y="0.6" width="10.8" height="10.8" fill="#2B2D2F" stroke="#A5A7A9" stroke-width="1.2"/><rect x="2" y="2" width="8" height="8" fill="#2D6A94"/><path d="M4 2.5v3.2M3.1 3.3l0.9-0.8M7.9 6.3v3.2M7 7.1l0.9-0.8" stroke="#F2F2F2" stroke-width="1" fill="none"/><ellipse cx="7.2" cy="4.1" rx="1.2" ry="1.4" fill="none" stroke="#F2F2F2" stroke-width="0.95"/><ellipse cx="4" cy="7.9" rx="1.2" ry="1.4" fill="none" stroke="#F2F2F2" stroke-width="0.95"/></svg>
<svg class="s" style="left:458px;top:490px" width="8" height="9" viewBox="0 0 8 9"><path d="M0 0L8 4.5L0 9z" fill="#AFB1B3"/></svg>
<svg class="s" style="left:478px;top:488px" width="12" height="12" viewBox="0 0 12 12"><rect x="0" y="0" width="12" height="3" fill="#C9A063"/><rect x="0" y="4.5" width="12" height="3" fill="#C9A063"/><rect x="0" y="9" width="12" height="3" fill="#C9A063"/></svg>
<svg class="s" style="left:438px;top:510px" width="8" height="9" viewBox="0 0 8 9"><path d="M0 0L8 4.5L0 9z" fill="#AFB1B3"/></svg>
<svg class="s" style="left:6px;top:392px" width="16" height="16" viewBox="0 0 16 16"><path d="M8.6 3.3A5.4 5.4 0 0 0 7.2 14" stroke="#32B44A" stroke-width="2.3" fill="none"/><path d="M7.6 0.6L13.8 3.5L7.6 6.4z" fill="#32B44A"/><rect x="7.9" y="7.9" width="7" height="7" fill="#A9A9A9" stroke="#2F3133" stroke-width="0.6"/></svg>
<svg class="s" style="left:7px;top:424px" width="16" height="15" viewBox="0 0 16 15"><path d="M4.9 1L14.8 7.4L4.9 13.8z" fill="#32B44A"/><path d="M1 1.6h3.6M1 3.6h3.6M1 5.6h3.6M1 7.6h3.6M1 9.6h3.6M1 11.6h3.6M1 13.6h3.6" stroke="#9A9C9E" stroke-width="0.9"/></svg>
<svg class="s" style="left:7px;top:505px" width="15" height="15" viewBox="0 0 15 15"><circle cx="6" cy="4.5" r="4.3" fill="#E05B4B"/><circle cx="6" cy="9.5" r="4.5" fill="#E05B4B" stroke="#3C3F41" stroke-width="0.8"/><circle cx="13" cy="5" r="1.6" fill="#9A9C9E"/><circle cx="13" cy="10" r="1.6" fill="#9A9C9E"/></svg>
<svg class="s" style="left:7px;top:530px" width="14" height="14" viewBox="0 0 14 14"><circle cx="7" cy="7" r="6.2" fill="none" stroke="#9A9C9E" stroke-width="1.2"/><circle cx="7" cy="7" r="4.8" fill="#E05B4B"/><path d="M3.7 10.3l6.6-6.6" stroke="#DDD" stroke-width="1.5"/></svg>
<svg class="s" style="left:7px;top:560px" width="15" height="15" viewBox="0 0 15 15"><rect x="0.5" y="0.5" width="9" height="6" fill="none" stroke="#3592C4"/><rect x="2" y="2.5" width="6" height="2" fill="#3592C4"/><rect x="11.5" y="0.5" width="3" height="6" fill="none" stroke="#8A8E91"/><rect x="0.5" y="9" width="14" height="5.5" fill="none" stroke="#8A8E91"/><rect x="2.5" y="11" width="10" height="1.5" fill="#8A8E91"/></svg>
<svg class="s" style="left:7px;top:586px" width="17" height="16" viewBox="0 0 17 16"><g fill="#3592C4"><circle cx="6.5" cy="6.5" r="4.5"/><rect x="5" y="0" width="3" height="13"/><rect x="0" y="5" width="13" height="3"/><rect x="5" y="0" width="3" height="13" transform="rotate(45 6.5 6.5)"/><rect x="5" y="0" width="3" height="13" transform="rotate(-45 6.5 6.5)"/></g><circle cx="6.5" cy="6.5" r="2" fill="#3C3F41"/><path d="M11 11.5h6l-3 3.5z" fill="#E0E0E0"/></svg>
<div class="t" style="left:22.6px;top:5.54px;font-family:'Liberation Sans', sans-serif;font-size:12px;font-weight:normal;font-style:normal;color:#000000;-webkit-text-stroke:0.15px currentColor;transform:scaleX(1.0544);">dokuwiki - [D:\dokuwiki]</div>
<div class="t" style="left:157px;top:5.54px;font-family:'Liberation Sans', sans-serif;font-size:12px;font-weight:normal;font-style:normal;color:#000000;-webkit-text-stroke:0.15px currentColor;transform:scaleX(1.1250);">-</div>
<div class="t" style="left:164.6px;top:5.54px;font-family:'Liberation Sans', sans-serif;font-size:12px;font-weight:normal;font-style:normal;color:#000000;-webkit-text-stroke:0.15px currentColor;transform:scaleX(1.0515);">[dokuwiki]</div>
<div class="t" style="left:224.5px;top:5.54px;font-family:'Liberation Sans', sans-serif;font-size:12px;font-weight:normal;font-style:normal;color:#000000;-webkit-text-stroke:0.15px currentColor;transform:scaleX(1.1250);">-</div>
<div class="t" style="left:231.2px;top:5.54px;font-family:'Liberation Sans', sans-serif;font-size:12px;font-weight:normal;font-style:normal;color:#000000;-webkit-text-stroke:0.15px currentColor;transform:scaleX(1.0518);">...\lib\plugins\ads\script.js</div>
<div class="t" style="left:375px;top:5.54px;font-family:'Liberation Sans', sans-serif;font-size:12px;font-weight:normal;font-style:normal;color:#000000;-webkit-text-stroke:0.15px currentColor;transform:scaleX(0.9256);">- IntelliJ IDEA 2017.2.7</div>
<div class="t" style="left:7px;top:28.34px;font-family:'Liberation Sans', sans-serif;font-size:12px;font-weight:normal;font-style:normal;color:#BBBBBB;-webkit-text-stroke:0.15px currentColor;transform:scaleX(0.8788);">File</div>
<div class="t" style="left:37px;top:28.34px;font-family:'Liberation Sans', sans-serif;font-size:12px;font-weight:normal;font-style:normal;color:#BBBBBB;-webkit-text-stroke:0.15px currentColor;transform:scaleX(0.9668);">Edit</div>
<div class="t" style="left:70px;top:28.34px;font-family:'Liberation Sans', sans-serif;font-size:12px;font-weight:normal;font-style:normal;color:#BBBBBB;-webkit-text-stroke:0.15px currentColor;transform:scaleX(0.9691);">View</div>
<div class="t" style="left:107.2px;top:28.34px;font-family:'Liberation Sans', sans-serif;font-size:12px;font-weight:normal;font-style:normal;color:#BBBBBB;-webkit-text-stroke:0.15px currentColor;transform:scaleX(0.9858);">Navigate</div>
<div class="t" style="left:166.4px;top:28.34px;font-family:'Liberation Sans', sans-serif;font-size:12px;font-weight:normal;font-style:normal;color:#BBBBBB;-webkit-text-stroke:0.15px currentColor;transform:scaleX(0.9586);">Code</div>
<div class="t" style="left:207.2px;top:28.34px;font-family:'Liberation Sans', sans-serif;font-size:12px;font-weight:normal;font-style:normal;color:#BBBBBB;-webkit-text-stroke:0.15px currentColor;transform:scaleX(0.9508);">Analyze</div>
<div class="t" style="left:260.3px;top:28.34px;font-family:'Liberation Sans', sans-serif;font-size:12px;font-weight:normal;font-style:normal;color:#BBBBBB;-webkit-text-stroke:0.15px currentColor;transform:scaleX(0.9590);">Refactor</div>
<div class="t" style="left:317.4px;top:28.34px;font-family:'Liberation Sans', sans-serif;font-size:12px;font-weight:normal;font-style:normal;color:#BBBBBB;-webkit-text-stroke:0.15px currentColor;transform:scaleX(0.9780);">Build</div>
<div class="t" style="left:356.5px;top:28.34px;font-family:'Liberation Sans', sans-serif;font-size:12px;font-weight:normal;font-style:normal;color:#BBBBBB;-webkit-text-stroke:0.15px currentColor;transform:scaleX(0.8857);">Run</div>
<div class="t" style="left:389.1px;top:28.34px;font-family:'Liberation Sans', sans-serif;font-size:12px;font-weight:normal;font-style:normal;color:#BBBBBB;-webkit-text-stroke:0.15px currentColor;transform:scaleX(0.9959);">Tools</div>
<div class="t" style="left:430px;top:28.34px;font-family:'Liberation Sans', sans-serif;font-size:12px;font-weight:normal;font-style:normal;color:#BBBBBB;-webkit-text-stroke:0.15px currentColor;transform:scaleX(0.8506);">VCS</div>
<div class="t" style="left:463px;top:28.34px;font-family:'Liberation Sans', sans-serif;font-size:12px;font-weight:normal;font-style:normal;color:#BBBBBB;-webkit-text-stroke:0.15px currentColor;transform:scaleX(1.0401);">Window</div>
<div class="t" style="left:520.5px;top:28.34px;font-family:'Liberation Sans', sans-serif;font-size:12px;font-weight:normal;font-style:normal;color:#BBBBBB;-webkit-text-stroke:0.15px currentColor;transform:scaleX(0.9924);">Help</div>
<div class="t" style="left:28.7px;top:55.34px;font-family:'Liberation Sans', sans-serif;font-size:12px;font-weight:bold;font-style:normal;color:#BBBBBB;transform:scaleX(0.9738);">dokuwiki</div>
<div class="t" style="left:111px;top:55.34px;font-family:'Liberation Sans', sans-serif;font-size:12px;font-weight:normal;font-style:normal;color:#BBBBBB;-webkit-text-stroke:0.15px currentColor;transform:scaleX(1.0570);">lib</div>
<div class="t" style="left:156.5px;top:55.34px;font-family:'Liberation Sans', sans-serif;font-size:12px;font-weight:normal;font-style:normal;color:#BBBBBB;-webkit-text-stroke:0.15px currentColor;transform:scaleX(1.0255);">plugins</div>
<div class="t" style="left:227.5px;top:55.34px;font-family:'Liberation Sans', sans-serif;font-size:12px;font-weight:normal;font-style:normal;color:#BBBBBB;-webkit-text-stroke:0.15px currentColor;transform:scaleX(0.8885);">ads</div>
<div class="t" style="left:277px;top:55.34px;font-family:'Liberation Sans', sans-serif;font-size:12px;font-weight:normal;font-style:normal;color:#6B9BD2;-webkit-text-stroke:0.15px currentColor;transform:scaleX(0.9761);">script.js</div>
<div class="t" style="left:29.7px;top:82.53px;font-family:'Liberation Sans', sans-serif;font-size:11.3px;font-weight:normal;font-style:normal;color:#BBBBBB;-webkit-text-stroke:0.15px currentColor;transform:scaleX(0.9667);">Project</div>
<div class="t" style="left:41.6px;top:104.24px;font-family:'Liberation Sans', sans-serif;font-size:12px;font-weight:bold;font-style:normal;color:#BBBBBB;transform:scaleX(0.9738);">dokuwiki</div>
<div class="t" style="left:97.3px;top:104.24px;font-family:'Liberation Sans', sans-serif;font-size:12px;font-weight:normal;font-style:normal;color:#808080;-webkit-text-stroke:0.15px currentColor;transform:scaleX(1.0381);">D:\dokuwiki</div>
<div class="t" style="left:61.3px;top:124.44px;font-family:'Liberation Sans', sans-serif;font-size:12px;font-weight:normal;font-style:normal;color:#BBBBBB;-webkit-text-stroke:0.15px currentColor;transform:scaleX(0.9796);">.idea</div>
<div class="t" style="left:61.3px;top:144.44px;font-family:'Liberation Sans', sans-serif;font-size:12px;font-weight:normal;font-style:normal;color:#BBBBBB;-webkit-text-stroke:0.15px currentColor;transform:scaleX(0.9097);">_cs</div>
<div class="t" style="left:61.3px;top:164.44px;font-family:'Liberation Sans', sans-serif;font-size:12px;font-weight:normal;font-style:normal;color:#BBBBBB;-webkit-text-stroke:0.15px currentColor;transform:scaleX(0.9610);">_test</div>
<div class="t" style="left:61.3px;top:184.44px;font-family:'Liberation Sans', sans-serif;font-size:12px;font-weight:normal;font-style:normal;color:#BBBBBB;-webkit-text-stroke:0.15px currentColor;transform:scaleX(1.0180);">bdoc</div>
<div class="t" style="left:61.3px;top:204.44px;font-family:'Liberation Sans', sans-serif;font-size:12px;font-weight:normal;font-style:normal;color:#BBBBBB;-webkit-text-stroke:0.15px currentColor;transform:scaleX(1.0302);">bin</div>
<div class="t" style="left:61.3px;top:224.44px;font-family:'Liberation Sans', sans-serif;font-size:12px;font-weight:normal;font-style:normal;color:#BBBBBB;-webkit-text-stroke:0.15px currentColor;transform:scaleX(1.0579);">conf</div>
<div class="t" style="left:61.3px;top:244.44px;font-family:'Liberation Sans', sans-serif;font-size:12px;font-weight:normal;font-style:normal;color:#BBBBBB;-webkit-text-stroke:0.15px currentColor;transform:scaleX(0.9846);">data</div>
<div class="t" style="left:61.3px;top:264.44px;font-family:'Liberation Sans', sans-serif;font-size:12px;font-weight:normal;font-style:normal;color:#BBBBBB;-webkit-text-stroke:0.15px currentColor;transform:scaleX(1.0486);">doc</div>
<div class="t" style="left:61.3px;top:284.44px;font-family:'Liberation Sans', sans-serif;font-size:12px;font-weight:normal;font-style:normal;color:#BBBBBB;-webkit-text-stroke:0.15px currentColor;transform:scaleX(1.0204);">dokudata</div>
<div class="t" style="left:61.3px;top:304.44px;font-family:'Liberation Sans', sans-serif;font-size:12px;font-weight:normal;font-style:normal;color:#BBBBBB;-webkit-text-stroke:0.15px currentColor;transform:scaleX(1.0428);">inc</div>
<div class="t" style="left:61.3px;top:324.44px;font-family:'Liberation Sans', sans-serif;font-size:12px;font-weight:normal;font-style:normal;color:#BBBBBB;-webkit-text-stroke:0.15px currentColor;transform:scaleX(1.0819);">lib</div>
<div class="t" style="left:61.3px;top:345.44px;font-family:'Liberation Sans', sans-serif;font-size:12px;font-weight:normal;font-style:normal;color:#BBBBBB;-webkit-text-stroke:0.15px currentColor;transform:scaleX(1.0329);">nbproject</div>
<div class="t" style="left:250.6px;top:83.34px;font-family:'Liberation Sans', sans-serif;font-size:12px;font-weight:normal;font-style:normal;color:#BBBBBB;-webkit-text-stroke:0.15px currentColor;transform:scaleX(0.9695);clip-path:inset(0 0 0 1.5px);">ate_NicoBoot.php</div>
<div class="t" style="left:394px;top:82.84px;font-family:'Liberation Sans', sans-serif;font-size:12px;font-weight:normal;font-style:normal;color:#BBBBBB;-webkit-text-stroke:0.15px currentColor;transform:scaleX(1.0243);">tpl_footer.php</div>
<div class="t" style="left:519px;top:82.84px;font-family:'Liberation Sans', sans-serif;font-size:12px;font-weight:normal;font-style:normal;color:#BBBBBB;-webkit-text-stroke:0.15px currentColor;transform:scaleX(1.0218);">action.php</div>
<div class="t" style="left:627px;top:82.84px;font-family:'Liberation Sans', sans-serif;font-size:12px;font-weight:normal;font-style:normal;color:#6B9BD2;-webkit-text-stroke:0.15px currentColor;transform:scaleX(0.9637);">consent_mo</div>
<div class="t" style="left:263.5px;top:105.05px;font-family:'Liberation Mono', monospace;font-size:11.67px;font-weight:normal;font-style:normal;color:#606366;transform:scaleX(1.0000);">1</div>
<div class="t" style="left:263.5px;top:122.05px;font-family:'Liberation Mono', monospace;font-size:11.67px;font-weight:normal;font-style:normal;color:#606366;transform:scaleX(1.0000);">2</div>
<div class="t" style="left:263.5px;top:139.05px;font-family:'Liberation Mono', monospace;font-size:11.67px;font-weight:normal;font-style:normal;color:#606366;transform:scaleX(1.0000);">3</div>
<div class="t" style="left:263.5px;top:156.05px;font-family:'Liberation Mono', monospace;font-size:11.67px;font-weight:normal;font-style:normal;color:#606366;transform:scaleX(1.0000);">4</div>
<div class="t" style="left:263.5px;top:173.05px;font-family:'Liberation Mono', monospace;font-size:11.67px;font-weight:normal;font-style:normal;color:#606366;transform:scaleX(1.0000);">5</div>
<div class="t" style="left:263.5px;top:190.05px;font-family:'Liberation Mono', monospace;font-size:11.67px;font-weight:normal;font-style:normal;color:#606366;transform:scaleX(1.0000);">6</div>
<div class="t" style="left:263.5px;top:207.05px;font-family:'Liberation Mono', monospace;font-size:11.67px;font-weight:normal;font-style:normal;color:#606366;transform:scaleX(1.0000);">7</div>
<div class="t" style="left:263.5px;top:224.05px;font-family:'Liberation Mono', monospace;font-size:11.67px;font-weight:normal;font-style:normal;color:#606366;transform:scaleX(1.0000);">8</div>
<div class="t" style="left:263.5px;top:241.05px;font-family:'Liberation Mono', monospace;font-size:11.67px;font-weight:normal;font-style:normal;color:#606366;transform:scaleX(1.0000);">9</div>
<div class="t" style="left:256.5px;top:258.05px;font-family:'Liberation Mono', monospace;font-size:11.67px;font-weight:normal;font-style:normal;color:#606366;transform:scaleX(1.0000);">10</div>
<div class="t" style="left:256.5px;top:275.05px;font-family:'Liberation Mono', monospace;font-size:11.67px;font-weight:normal;font-style:normal;color:#606366;transform:scaleX(1.0000);">11</div>
<div class="t" style="left:256.5px;top:292.05px;font-family:'Liberation Mono', monospace;font-size:11.67px;font-weight:normal;font-style:normal;color:#606366;transform:scaleX(1.0000);">12</div>
<div class="t" style="left:256.5px;top:309.05px;font-family:'Liberation Mono', monospace;font-size:11.67px;font-weight:normal;font-style:normal;color:#606366;transform:scaleX(1.0000);">13</div>
<div class="t" style="left:256.5px;top:326.05px;font-family:'Liberation Mono', monospace;font-size:11.67px;font-weight:normal;font-style:normal;color:#606366;transform:scaleX(1.0000);">14</div>
<div class="t" style="left:317px;top:346.84px;font-family:'Liberation Sans', sans-serif;font-size:12px;font-weight:normal;font-style:normal;color:#BBBBBB;-webkit-text-stroke:0.15px currentColor;transform:scaleX(0.9298);">ads</div>
<div class="t" style="left:359.6px;top:346.84px;font-family:'Liberation Sans', sans-serif;font-size:12px;font-weight:normal;font-style:normal;color:#BBBBBB;-webkit-text-stroke:0.15px currentColor;transform:scaleX(0.9834);">consent()</div>
<div class="t" style="left:5.7px;top:371.07px;font-family:'Liberation Sans', sans-serif;font-size:11.5px;font-weight:normal;font-style:normal;color:#BBBBBB;-webkit-text-stroke:0.15px currentColor;transform:scaleX(0.9973);">Debug</div>
<div class="t" style="left:64px;top:371.07px;font-family:'Liberation Sans', sans-serif;font-size:11.5px;font-weight:normal;font-style:normal;color:#BBBBBB;-webkit-text-stroke:0.15px currentColor;transform:scaleX(1.0092);">consent.html</div>
<div class="t" style="left:37px;top:394.21px;font-family:'Liberation Sans', sans-serif;font-size:11.8px;font-weight:normal;font-style:normal;color:#BBBBBB;-webkit-text-stroke:0.15px currentColor;transform:scaleX(0.9840);">Debugger</div>
<div class="t" style="left:117.5px;top:394.21px;font-family:'Liberation Sans', sans-serif;font-size:11.8px;font-weight:normal;font-style:normal;color:#BBBBBB;-webkit-text-stroke:0.15px currentColor;transform:scaleX(0.9516);">Console</div>
<div class="t" style="left:205.4px;top:394.21px;font-family:'Liberation Sans', sans-serif;font-size:11.8px;font-weight:normal;font-style:normal;color:#BBBBBB;-webkit-text-stroke:0.15px currentColor;transform:scaleX(0.9151);">Scripts</div>
<div class="t" style="left:506.5px;top:395.04px;font-family:'Liberation Sans', sans-serif;font-size:12px;font-weight:normal;font-style:normal;color:#BBBBBB;-webkit-text-stroke:0.15px currentColor;transform:scaleX(0.9576);">Async</div>
<div class="t" style="left:53.8px;top:424.47px;font-family:'Liberation Sans', sans-serif;font-size:11.5px;font-weight:normal;font-style:normal;color:#BBBBBB;-webkit-text-stroke:0.15px currentColor;transform:scaleX(0.8927);">Frames</div>
<div class="t" style="left:430.9px;top:424.47px;font-family:'Liberation Sans', sans-serif;font-size:11.5px;font-weight:normal;font-style:normal;color:#BBBBBB;-webkit-text-stroke:0.15px currentColor;transform:scaleX(0.9895);">Variables</div>
<div class="t" style="left:56.7px;top:475.70px;font-family:'Liberation Sans', sans-serif;font-size:11.7px;font-weight:normal;font-style:normal;color:#BBBBBB;-webkit-text-stroke:0.15px currentColor;transform:scaleX(0.9973);">consent(), script.js:4</div>
<div class="t" style="left:56.7px;top:496.00px;font-family:'Liberation Sans', sans-serif;font-size:11.7px;font-weight:normal;font-style:normal;color:#BBBBBB;-webkit-text-stroke:0.15px currentColor;transform:scaleX(0.9721);">script.js:46</div>
<div class="t" style="left:458px;top:448.74px;font-family:'Liberation Sans', sans-serif;font-size:12px;font-weight:normal;font-style:normal;color:#BBBBBB;-webkit-text-stroke:0.15px currentColor;transform:scaleX(0.9307);">Local</div>
<div class="t" style="left:495px;top:469.34px;font-family:'Liberation Sans', sans-serif;font-size:12px;font-weight:normal;font-style:normal;color:#E5736A;-webkit-text-stroke:0.15px currentColor;transform:scaleX(0.9886);">this.selector</div>
<div class="t" style="left:562px;top:469.34px;font-family:'Liberation Sans', sans-serif;font-size:12px;font-weight:normal;font-style:normal;color:#BBBBBB;-webkit-text-stroke:0.15px currentColor;transform:scaleX(0.9978);">=</div>
<div class="t" style="left:573px;top:469.34px;font-family:'Liberation Sans', sans-serif;font-size:12px;font-weight:normal;font-style:normal;color:#6A8759;-webkit-text-stroke:0.15px currentColor;transform:scaleX(0.9895);">&quot;#gdpr_consent&quot;</div>
<div class="t" style="left:495px;top:488.84px;font-family:'Liberation Sans', sans-serif;font-size:12px;font-weight:normal;font-style:normal;color:#E5736A;-webkit-text-stroke:0.15px currentColor;transform:scaleX(1.0167);">this</div>
<div class="t" style="left:517.5px;top:488.84px;font-family:'Liberation Sans', sans-serif;font-size:12px;font-weight:normal;font-style:normal;color:#BBBBBB;-webkit-text-stroke:0.15px currentColor;transform:scaleX(0.9978);">=</div>
<div class="t" style="left:528px;top:488.84px;font-family:'Liberation Sans', sans-serif;font-size:12px;font-weight:normal;font-style:normal;color:#808080;-webkit-text-stroke:0.15px currentColor;transform:scaleX(1.0090);">Object</div>
<div class="t" style="left:458px;top:508.84px;font-family:'Liberation Sans', sans-serif;font-size:12px;font-weight:normal;font-style:normal;color:#BBBBBB;-webkit-text-stroke:0.15px currentColor;transform:scaleX(0.9456);">Global</div>
<div class="t" style="left:494.5px;top:508.84px;font-family:'Liberation Sans', sans-serif;font-size:12px;font-weight:normal;font-style:normal;color:#BBBBBB;-webkit-text-stroke:0.15px currentColor;transform:scaleX(0.9978);">=</div>
<div class="t" style="left:505.5px;top:508.84px;font-family:'Liberation Sans', sans-serif;font-size:12px;font-weight:normal;font-style:normal;color:#808080;-webkit-text-stroke:0.15px currentColor;transform:scaleX(1.0190);">Window</div>
<div class="code" style="top:105.05px"><span style="color:#CC7832">var</span><span style="color:#A9B7C6"> ads = {</span></div>
<div class="code" style="top:122.05px"><span style="color:#A9B7C6">    </span><span style="color:#9876AA">selector</span><span style="color:#A9B7C6">: </span><span style="color:#6A8759">'#gdpr_consent'</span><span style="color:#CC7832">,</span><span style="color:#3D7F5F">  <i>this.selector: "#gdpr_consent"</i></span></div>
<div class="code" style="top:139.05px"><span style="color:#A9B7C6">    </span><span style="color:#FFC66D">consent</span><span style="color:#A9B7C6">: </span><span style="color:#CC7832">function</span><span style="color:#A9B7C6"> () {</span></div>
<div class="code" style="top:156.05px"><span style="color:#A9B7C6">        </span><span style="color:#CC7832">if</span><span style="color:#A9B7C6"> (!</span><span style="color:#9876AA">localStorage</span><span style="color:#A9B7C6">.</span><span style="color:#FFC66D">getItem</span><span style="color:#A9B7C6">(</span><span style="color:#6A8759">'<u>cookieconsent</u>'</span><span style="color:#A9B7C6">)) {</span></div>
<div class="code" style="top:173.05px"><span style="color:#A9B7C6">            </span><span style="color:#CC7832">let</span><span style="color:#A9B7C6"> selector = </span><span style="color:#CC7832">this</span><span style="color:#A9B7C6">.</span><span style="color:#9876AA">selector</span><span style="color:#CC7832">;</span><span style="color:#3D7F5F">  <i>this.selector: "#gdpr_consent"</i></span></div>
<div class="code" style="top:190.05px"><span style="color:#A9B7C6">            </span><span style="color:#808080">// Show the alert</span></div>
<div class="code" style="top:207.05px"><span style="color:#A9B7C6">            </span><span style="color:#A9B7C6"><u>jQuery</u>(selector).</span><span style="color:#FFC66D">addClass</span><span style="color:#A9B7C6">(</span><span style="color:#6A8759">'show'</span><span style="color:#A9B7C6">)</span><span style="color:#CC7832">;</span></div>
<div class="code" style="top:224.05px"><span style="color:#A9B7C6">            </span><span style="color:#808080">// When it's closed, we save the consent</span></div>
<div class="code" style="top:241.05px"><span style="color:#A9B7C6">            </span><span style="color:#A9B7C6"><u>jQuery</u>(selector).</span><span style="color:#FFC66D">on</span><span style="color:#A9B7C6">(</span><span style="color:#6A8759">'closed.bs.alert'</span><span style="color:#CC7832">, function</span><span style="color:#A9B7C6"> () {</span></div>
<div class="code" style="top:258.05px"><span style="color:#A9B7C6">                </span><span style="color:#808080">//  This event is fired when the alert has been closed</span></div>
<div class="code" style="top:275.05px"><span style="color:#A9B7C6">                </span><span style="color:#9876AA">console</span><span style="color:#A9B7C6">.</span><span style="color:#FFC66D">log</span><span style="color:#A9B7C6">(</span><span style="color:#6A8759">"<u>Gdpr</u> was closed"</span><span style="color:#A9B7C6">)</span><span style="color:#CC7832">;</span></div>
<div class="code" style="top:292.05px"><span style="color:#A9B7C6">                </span><span style="color:#9876AA">localStorage</span><span style="color:#A9B7C6">.</span><span style="color:#FFC66D">setItem</span><span style="color:#A9B7C6">(</span><span style="color:#6A8759">'<u>cookieconsent</u>'</span><span style="color:#CC7832">, </span><span style="color:#6A8759">'true'</span><span style="color:#A9B7C6">)</span><span style="color:#CC7832">;</span></div>
<div class="code" style="top:309.05px"><span style="color:#A9B7C6">            </span><span style="color:#A9B7C6">})</span></div>
<div class="code" style="top:326.05px"><span style="color:#A9B7C6">        </span><span style="color:#A9B7C6">}</span></div>
<svg class="s" style="left:558px;top:165px" width="91" height="3" viewBox="0 0 91 3"><path d="M0 2.5 L2.0 0.5 L4.0 2.5 L6.0 0.5 L8.0 2.5 L10.0 0.5 L12.0 2.5 L14.0 0.5 L16.0 2.5 L18.0 0.5 L20.0 2.5 L22.0 0.5 L24.0 2.5 L26.0 0.5 L28.0 2.5 L30.0 0.5 L32.0 2.5 L34.0 0.5 L36.0 2.5 L38.0 0.5 L40.0 2.5 L42.0 0.5 L44.0 2.5 L46.0 0.5 L48.0 2.5 L50.0 0.5 L52.0 2.5 L54.0 0.5 L56.0 2.5 L58.0 0.5 L60.0 2.5 L62.0 0.5 L64.0 2.5 L66.0 0.5 L68.0 2.5 L70.0 0.5 L72.0 2.5 L74.0 0.5 L76.0 2.5 L78.0 0.5 L80.0 2.5 L82.0 0.5 L84.0 2.5 L86.0 0.5 L88.0 2.5 L90.0 0.5 L92.0 2.5" stroke="#9A956A" stroke-width="1" fill="none"/></svg>
<svg class="s" style="left:397px;top:216px" width="42" height="3" viewBox="0 0 42 3"><path d="M0 2.5 L2.0 0.5 L4.0 2.5 L6.0 0.5 L8.0 2.5 L10.0 0.5 L12.0 2.5 L14.0 0.5 L16.0 2.5 L18.0 0.5 L20.0 2.5 L22.0 0.5 L24.0 2.5 L26.0 0.5 L28.0 2.5 L30.0 0.5 L32.0 2.5 L34.0 0.5 L36.0 2.5 L38.0 0.5 L40.0 2.5 L42.0 0.5" stroke="#9A956A" stroke-width="1" fill="none"/></svg>
<svg class="s" style="left:397px;top:250px" width="42" height="3" viewBox="0 0 42 3"><path d="M0 2.5 L2.0 0.5 L4.0 2.5 L6.0 0.5 L8.0 2.5 L10.0 0.5 L12.0 2.5 L14.0 0.5 L16.0 2.5 L18.0 0.5 L20.0 2.5 L22.0 0.5 L24.0 2.5 L26.0 0.5 L28.0 2.5 L30.0 0.5 L32.0 2.5 L34.0 0.5 L36.0 2.5 L38.0 0.5 L40.0 2.5 L42.0 0.5" stroke="#9A956A" stroke-width="1" fill="none"/></svg>
<svg class="s" style="left:516px;top:284px" width="28" height="3" viewBox="0 0 28 3"><path d="M0 2.5 L2.0 0.5 L4.0 2.5 L6.0 0.5 L8.0 2.5 L10.0 0.5 L12.0 2.5 L14.0 0.5 L16.0 2.5 L18.0 0.5 L20.0 2.5 L22.0 0.5 L24.0 2.5 L26.0 0.5 L28.0 2.5" stroke="#9A956A" stroke-width="1" fill="none"/></svg>
<svg class="s" style="left:579px;top:301px" width="91" height="3" viewBox="0 0 91 3"><path d="M0 2.5 L2.0 0.5 L4.0 2.5 L6.0 0.5 L8.0 2.5 L10.0 0.5 L12.0 2.5 L14.0 0.5 L16.0 2.5 L18.0 0.5 L20.0 2.5 L22.0 0.5 L24.0 2.5 L26.0 0.5 L28.0 2.5 L30.0 0.5 L32.0 2.5 L34.0 0.5 L36.0 2.5 L38.0 0.5 L40.0 2.5 L42.0 0.5 L44.0 2.5 L46.0 0.5 L48.0 2.5 L50.0 0.5 L52.0 2.5 L54.0 0.5 L56.0 2.5 L58.0 0.5 L60.0 2.5 L62.0 0.5 L64.0 2.5 L66.0 0.5 L68.0 2.5 L70.0 0.5 L72.0 2.5 L74.0 0.5 L76.0 2.5 L78.0 0.5 L80.0 2.5 L82.0 0.5 L84.0 2.5 L86.0 0.5 L88.0 2.5 L90.0 0.5 L92.0 2.5" stroke="#9A956A" stroke-width="1" fill="none"/></svg>
<div class="r" style="left:331px;top:80px;width:14px;height:17px;background:linear-gradient(90deg, rgba(60,63,65,0), rgba(60,63,65,0.55))"></div>
</body></html>
